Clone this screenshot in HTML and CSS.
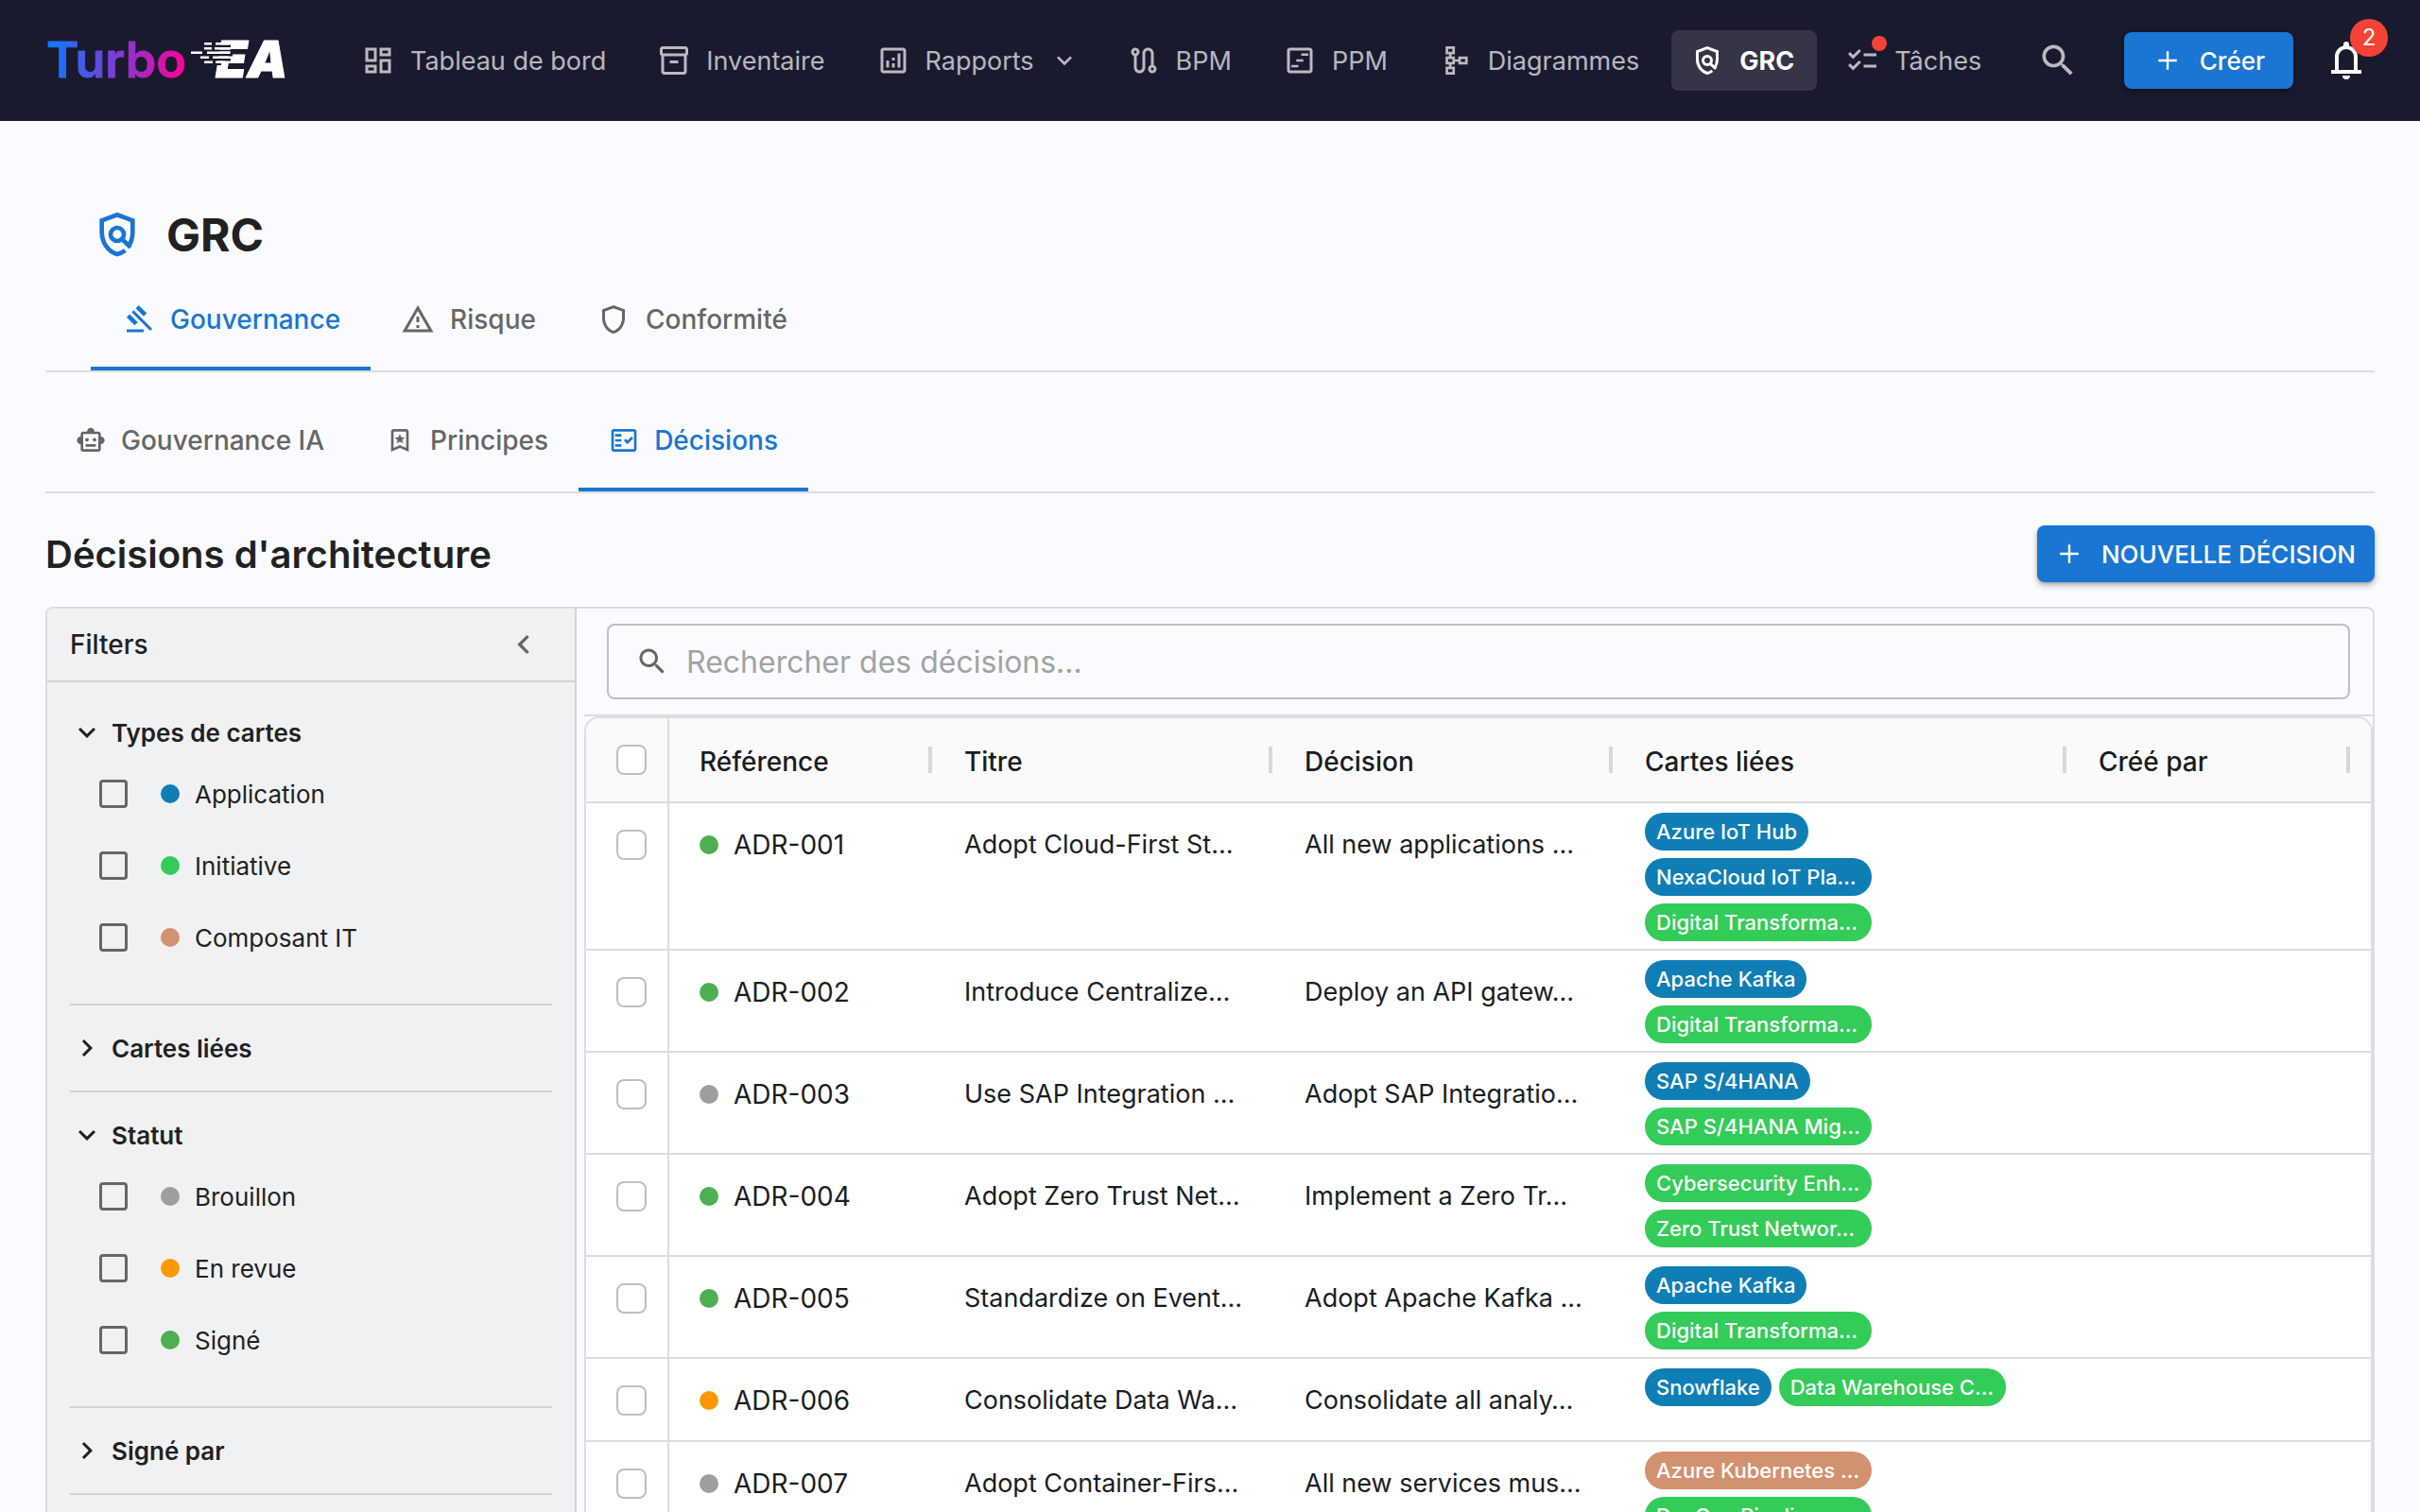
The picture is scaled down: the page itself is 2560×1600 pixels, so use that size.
FILE: index.html
```html
<!DOCTYPE html>
<html lang="fr">
<head>
  <meta charset="UTF-8">
  <meta name="viewport" content="width=device-width, initial-scale=1">
  <title>Turbo EA - GRC</title>
  <link rel="stylesheet" href="styles.css">
</head>
<body>

  <!-- icon sprite -->
  <svg class="sprite" aria-hidden="true">
    <symbol id="i-dashboard" viewBox="0 0 24 24"><path d="M19 5v2h-4V5h4M9 5v6H5V5h4m10 8v6h-4v-6h4M9 17v2H5v-2h4M21 3h-8v6h8V3zM11 3H3v10h8V3zm10 8h-8v10h8V11zm-10 4H3v6h8v-6z"/></symbol>
    <symbol id="i-inventory" viewBox="0 0 24 24"><path d="M20 2H4c-1 0-2 .9-2 2v3.01c0 .72.43 1.34 1 1.69V20c0 1.1 1.1 2 2 2h14c.9 0 2-.9 2-2V8.7c.57-.35 1-.97 1-1.69V4c0-1.1-1-2-2-2zm-1 18H5V9h14v11zm1-13H4V4h16v3zM9 12h6v2H9z"/></symbol>
    <symbol id="i-analytics" viewBox="0 0 24 24"><path d="M19 3H5c-1.1 0-2 .9-2 2v14c0 1.1.9 2 2 2h14c1.1 0 2-.9 2-2V5c0-1.1-.9-2-2-2zm0 16H5V5h14v14zM7 12h2v5H7zM15 7h2v10h-2zM11 14h2v3h-2zM11 10h2v2h-2z"/></symbol>
    <symbol id="i-route" viewBox="0 0 24 24"><path d="M19 15.18V7c0-2.21-1.79-4-4-4s-4 1.79-4 4v10c0 1.1-.9 2-2 2s-2-.9-2-2V8.82C8.16 8.4 9 7.3 9 6c0-1.66-1.34-3-3-3S3 4.34 3 6c0 1.3.84 2.4 2 2.82V17c0 2.21 1.79 4 4 4s4-1.79 4-4V7c0-1.1.9-2 2-2s2 .9 2 2v8.18c-1.16.41-2 1.51-2 2.82 0 1.66 1.34 3 3 3s3-1.34 3-3c0-1.3-.84-2.4-2-2.82zM6 7c-.55 0-1-.45-1-1s.45-1 1-1 1 .45 1 1-.45 1-1 1zm12 12c-.55 0-1-.45-1-1s.45-1 1-1 1 .45 1 1-.45 1-1 1z"/></symbol>
    <symbol id="i-gantt" viewBox="0 0 24 24"><path d="M19 3H5c-1.1 0-2 .9-2 2v14c0 1.1.9 2 2 2h14c1.1 0 2-.9 2-2V5c0-1.1-.9-2-2-2zm0 16H5V5h14v14zM13 7h5v1.6h-5zM9.5 11.2h5v1.6h-5zM6 15.2h5v1.6H6z"/></symbol>
    <symbol id="i-diagram" viewBox="0 0 24 24"><path fill="none" stroke="currentColor" stroke-width="1.8" d="M5.7 2.9h4.8v3.8H5.7zM5.7 10.1h4.8v3.8H5.7zM5.7 17.3h4.8v3.8H5.7zM14.7 10.1h4.8v3.8h-4.8zM8.1 6.7v3.4M8.1 13.9v3.4M10.5 12h4.2"/></symbol>
    <symbol id="i-policy" viewBox="0 0 24 24"><path fill="none" stroke="currentColor" stroke-width="2" d="M15.6 19.3C14.6 20.1 13.4 20.7 12 21 8 19.8 5 15.9 5 11.1V5.7L12 3.1l7 2.6v5.4c0 2-.5 3.9-1.4 5.5M14.2 14.2l3.9 3.7"/><circle cx="12" cy="12" r="3" fill="none" stroke="currentColor" stroke-width="2"/></symbol>
    <symbol id="i-checklist" viewBox="0 0 24 24"><path d="M22 7h-9v2h9V7zm0 8h-9v2h9v-2zM5.54 11L2 7.46l1.41-1.41 2.12 2.12 4.24-4.24 1.41 1.41L5.54 11zm0 8L2 15.46l1.41-1.41 2.12 2.12 4.24-4.24 1.41 1.41L5.54 19z"/></symbol>
    <symbol id="i-search" viewBox="0 0 24 24"><path d="M15.5 14h-.79l-.28-.27C15.41 12.59 16 11.11 16 9.5 16 5.91 13.09 3 9.5 3S3 5.91 3 9.5 5.91 16 9.5 16c1.61 0 3.09-.59 4.23-1.57l.27.28v.79l5 4.99L20.49 19l-4.99-5zm-6 0C7.01 14 5 11.99 5 9.5S7.01 5 9.5 5 14 7.01 14 9.5 11.99 14 9.5 14z"/></symbol>
    <symbol id="i-add" viewBox="0 0 24 24"><path d="M18.5 12.8h-5.7v5.7h-1.6v-5.7H5.5v-1.6h5.7V5.5h1.6v5.7h5.7z"/></symbol>
    <symbol id="i-bell" viewBox="0 0 24 24"><path d="M4 19v-2h2v-7c0-2.8 1.7-5.1 4.5-5.8v-.7a1.5 1.5 0 0 1 3 0v.7C16.3 4.9 18 7.2 18 10v7h2v2H4zm8 3a2 2 0 0 1-2-2h4a2 2 0 0 1-2 2zM8 17h8v-7a4 4 0 0 0-8 0v7z"/></symbol>
    <symbol id="i-gavel" viewBox="0 -960 960 960"><path d="M160-120v-80h480v80H160Zm226-194L160-540l84-86 228 226-86 86Zm254-254L414-796l86-84 226 226-86 86Zm184 408L302-682l56-56 522 522-56 56Z"/></symbol>
    <symbol id="i-warning" viewBox="0 0 24 24"><path d="M12 5.99L19.53 19H4.47L12 5.99M12 2L1 21h22L12 2zm1 14h-2v2h2v-2zm0-6h-2v4h2v-4z"/></symbol>
    <symbol id="i-shield" viewBox="0 0 24 24"><path d="M12 2L4 5v6.09c0 5.05 3.41 9.76 8 10.91 4.59-1.15 8-5.86 8-10.91V5l-8-3zm6 9.09c0 4-2.55 7.7-6 8.83-3.45-1.13-6-4.82-6-8.83v-4.7l6-2.25 6 2.25v4.7z"/></symbol>
    <symbol id="i-robot" viewBox="0 0 24 24"><path d="M20 9V7c0-1.1-.9-2-2-2h-3c0-1.66-1.34-3-3-3S9 3.34 9 5H6c-1.1 0-2 .9-2 2v2c-1.66 0-3 1.34-3 3s1.34 3 3 3v4c0 1.1.9 2 2 2h12c1.1 0 2-.9 2-2v-4c1.66 0 3-1.34 3-3s-1.34-3-3-3zm-2 10H6V7h12v12zM8 15h8v2H8z"/><circle cx="9" cy="11.5" r="1.4"/><circle cx="15" cy="11.5" r="1.4"/></symbol>
    <symbol id="i-bookmark" viewBox="0 0 24 24"><path d="M17 3H7c-1.1 0-2 .9-2 2v16l7-3 7 3V5c0-1.1-.9-2-2-2zm0 15l-5-2.2L7 18V5h10v13zM12 7l1.2 2.5 2.8.3-2.1 1.9.6 2.7-2.5-1.4-2.5 1.4.6-2.7L8 9.8l2.8-.3z"/></symbol>
    <symbol id="i-factcheck" viewBox="0 0 24 24"><path d="M20 3H4c-1.1 0-2 .9-2 2v14c0 1.1.9 2 2 2h16c1.1 0 2-.9 2-2V5c0-1.1-.9-2-2-2zm0 16H4V5h16v14zM19.41 10.42L17.99 9l-3.17 3.17-1.41-1.42L12 12.16 14.82 15zM5 7h5v2H5zM5 11h5v2H5zM5 15h5v2H5z"/></symbol>
    <symbol id="i-down" viewBox="0 0 24 24"><path d="M7.41 8.59L12 13.17l4.59-4.58L18 10l-6 6-6-6z"/></symbol>
    <symbol id="i-left" viewBox="0 0 24 24"><path d="M15.41 7.41L14 6l-6 6 6 6 1.41-1.41L10.83 12z"/></symbol>
    <symbol id="i-right" viewBox="0 0 24 24"><path d="M10 6L8.59 7.41 13.17 12l-4.58 4.59L10 18l6-6z"/></symbol>
  </svg>

  <header class="topbar">
    <a class="logo" href="#" aria-label="Turbo EA">
      <svg viewBox="-8 -10 280 80">
        <defs>
          <linearGradient id="logo-grad" gradientUnits="userSpaceOnUse" x1="2" y1="0" x2="150" y2="0">
            <stop offset="0" stop-color="#0a7bff"/>
            <stop offset="0.55" stop-color="#8a35cf"/>
            <stop offset="1" stop-color="#ff0099"/>
          </linearGradient>
        </defs>
        <text class="logo-turbo" x="1" y="48" fill="url(#logo-grad)" stroke="url(#logo-grad)">Turbo</text>
        <text class="logo-ea" x="180" y="48">EA</text>
        <path class="logo-cuts" d="M176 13.5h20v2.500h-20zM176 18.500h24v2h-24zM176 23h22v2.500h-22zM176 28h20v2.500h-20zM176 33h10v2h-10z"/>
        <path class="logo-lines" d="M168 11h8v2.500h-8zM180 11h14v2.500h-14zM168 16h8v2.500h-8zM179 16h16v2.500h-16zM154 20.500h12v2.500h-12zM171 20.500h24v2.500h-24zM164 25.500h9v2.500h-9zM177 25.500h16v2.500h-16zM168 30.500h9v2.500h-9zM180 30.500h10v2.500h-10z"/>
      </svg>
    </a>

    <nav class="nav">
      <a class="nav-item" href="#"><svg class="icon"><use href="#i-dashboard"/></svg>Tableau de bord</a>
      <a class="nav-item" href="#"><svg class="icon"><use href="#i-inventory"/></svg>Inventaire</a>
      <a class="nav-item has-menu" href="#"><svg class="icon"><use href="#i-analytics"/></svg>Rapports<svg class="icon caret"><use href="#i-down"/></svg></a>
      <a class="nav-item" href="#"><svg class="icon"><use href="#i-route"/></svg>BPM</a>
      <a class="nav-item" href="#"><svg class="icon"><use href="#i-gantt"/></svg>PPM</a>
      <a class="nav-item" href="#"><svg class="icon"><use href="#i-diagram"/></svg>Diagrammes</a>
      <a class="nav-item active" href="#"><svg class="icon"><use href="#i-policy"/></svg>GRC</a>
      <a class="nav-item" href="#"><span class="dot-wrap"><svg class="icon"><use href="#i-checklist"/></svg><span class="red-dot"></span></span>Tâches</a>
    </nav>

    <div class="topbar-actions">
      <button class="icon-btn search-btn" type="button" aria-label="Rechercher"><svg><use href="#i-search"/></svg></button>
      <button class="btn create-btn" type="button"><svg class="icon"><use href="#i-add"/></svg>Créer</button>
      <button class="icon-btn bell-btn" type="button" aria-label="Notifications"><svg><use href="#i-bell"/></svg><span class="badge">2</span></button>
    </div>
  </header>

  <main>
    <div class="page-title">
      <svg><use href="#i-policy"/></svg>
      <h1>GRC</h1>
    </div>

    <div class="tabs main-tabs" role="tablist">
      <button class="tab selected" type="button" role="tab"><svg><use href="#i-gavel"/></svg>Gouvernance</button>
      <button class="tab" type="button" role="tab"><svg><use href="#i-warning"/></svg>Risque</button>
      <button class="tab" type="button" role="tab"><svg><use href="#i-shield"/></svg>Conformité</button>
    </div>

    <div class="tabs sub-tabs" role="tablist">
      <button class="tab" type="button" role="tab"><svg><use href="#i-robot"/></svg>Gouvernance IA</button>
      <button class="tab" type="button" role="tab"><svg><use href="#i-bookmark"/></svg>Principes</button>
      <button class="tab selected" type="button" role="tab"><svg><use href="#i-factcheck"/></svg>Décisions</button>
    </div>

    <div class="section-head">
      <h2>Décisions d'architecture</h2>
      <button class="btn" type="button"><svg class="icon"><use href="#i-add"/></svg>NOUVELLE DÉCISION</button>
    </div>

    <div class="panel">
      <aside class="filters">
        <div class="filters-head">
          <span>Filters</span>
          <button type="button" aria-label="Réduire"><svg><use href="#i-left"/></svg></button>
        </div>

        <section class="group first open">
          <button class="group-head" type="button"><svg><use href="#i-down"/></svg>Types de cartes</button>
          <label><input type="checkbox"><span class="dot app"></span>Application</label>
          <label><input type="checkbox"><span class="dot init"></span>Initiative</label>
          <label><input type="checkbox"><span class="dot itc"></span>Composant IT</label>
        </section>
        <section class="group">
          <button class="group-head" type="button"><svg><use href="#i-right"/></svg>Cartes liées</button>
        </section>
        <section class="group open">
          <button class="group-head" type="button"><svg><use href="#i-down"/></svg>Statut</button>
          <label><input type="checkbox"><span class="dot draft"></span>Brouillon</label>
          <label><input type="checkbox"><span class="dot review"></span>En revue</label>
          <label><input type="checkbox"><span class="dot signed"></span>Signé</label>
        </section>
        <section class="group">
          <button class="group-head" type="button"><svg><use href="#i-right"/></svg>Signé par</button>
        </section>
      </aside>

      <div class="results">
        <div class="toolbar">
          <label class="search">
            <svg><use href="#i-search"/></svg>
            <input type="text" placeholder="Rechercher des décisions…" aria-label="Rechercher des décisions">
          </label>
        </div>

        <div class="grid">
          <table>
            <colgroup>
              <col class="c-check"><col class="c-ref"><col class="c-text"><col class="c-text"><col class="c-cards"><col class="c-by"><col>
            </colgroup>
            <thead>
              <tr>
                <th class="check"><input type="checkbox" aria-label="Tout sélectionner"></th>
                <th><div class="th">Référence</div></th>
                <th><div class="th">Titre</div></th>
                <th><div class="th">Décision</div></th>
                <th><div class="th">Cartes liées</div></th>
                <th><div class="th">Créé par</div></th>
                <th></th>
              </tr>
            </thead>
            <tbody>
              <tr>
                <td class="check"><input type="checkbox" aria-label="ADR-001"></td>
                <td class="ref"><span class="dot signed"></span>ADR-001</td>
                <td>Adopt Cloud-First St…</td>
                <td>All new applications …</td>
                <td><div class="chips"><span class="chip app">Azure IoT Hub</span><span class="chip app long">NexaCloud IoT Pla…</span><span class="chip init long">Digital Transforma…</span></div></td>
                <td></td><td></td>
              </tr>
              <tr>
                <td class="check"><input type="checkbox" aria-label="ADR-002"></td>
                <td class="ref"><span class="dot signed"></span>ADR-002</td>
                <td>Introduce Centralize…</td>
                <td>Deploy an API gatew…</td>
                <td><div class="chips"><span class="chip app">Apache Kafka</span><span class="chip init long">Digital Transforma…</span></div></td>
                <td></td><td></td>
              </tr>
              <tr>
                <td class="check"><input type="checkbox" aria-label="ADR-003"></td>
                <td class="ref"><span class="dot draft"></span>ADR-003</td>
                <td>Use SAP Integration …</td>
                <td>Adopt SAP Integratio…</td>
                <td><div class="chips"><span class="chip app">SAP S/4HANA</span><span class="chip init long">SAP S/4HANA Mig…</span></div></td>
                <td></td><td></td>
              </tr>
              <tr>
                <td class="check"><input type="checkbox" aria-label="ADR-004"></td>
                <td class="ref"><span class="dot signed"></span>ADR-004</td>
                <td>Adopt Zero Trust Net…</td>
                <td>Implement a Zero Tr…</td>
                <td><div class="chips"><span class="chip init long">Cybersecurity Enh…</span><span class="chip init long">Zero Trust Networ…</span></div></td>
                <td></td><td></td>
              </tr>
              <tr>
                <td class="check"><input type="checkbox" aria-label="ADR-005"></td>
                <td class="ref"><span class="dot signed"></span>ADR-005</td>
                <td>Standardize on Event…</td>
                <td>Adopt Apache Kafka …</td>
                <td><div class="chips"><span class="chip app">Apache Kafka</span><span class="chip init long">Digital Transforma…</span></div></td>
                <td></td><td></td>
              </tr>
              <tr>
                <td class="check"><input type="checkbox" aria-label="ADR-006"></td>
                <td class="ref"><span class="dot review"></span>ADR-006</td>
                <td>Consolidate Data Wa…</td>
                <td>Consolidate all analy…</td>
                <td><div class="chips"><span class="chip app">Snowflake</span><span class="chip init long">Data Warehouse C…</span></div></td>
                <td></td><td></td>
              </tr>
              <tr>
                <td class="check"><input type="checkbox" aria-label="ADR-007"></td>
                <td class="ref"><span class="dot draft"></span>ADR-007</td>
                <td>Adopt Container-Firs…</td>
                <td>All new services mus…</td>
                <td><div class="chips"><span class="chip itc long">Azure Kubernetes …</span><span class="chip init long">DevOps Pipeline …</span></div></td>
                <td></td><td></td>
              </tr>
            </tbody>
          </table>
        </div>
      </div>
    </div>
  </main>

</body>
</html>
```
FILE: styles.css
```css
* {
  box-sizing: border-box;
}

body {
  margin: 0;
  height: 100vh;
  display: flex;
  flex-direction: column;
  overflow: hidden;
  background: #fafbfe;
  color: #212121;
  font-family: Inter, "Liberation Sans", sans-serif;
  font-size: 28px;
}

button, input {
  font: inherit;
  color: inherit;
}

button {
  border: none;
  background: none;
  padding: 0;
  cursor: pointer;
}

svg {
  fill: currentColor;
  flex: none;
}

.sprite {
  position: absolute;
  width: 0;
  height: 0;
}

.icon {
  width: 36px;
  height: 36px;
}

/* top bar */
.topbar {
  height: 128px;
  flex: none;
  display: flex;
  align-items: center;
  padding: 0 38px 0 40px;
  background: #1a1a2e;
}

.logo svg {
  display: block;
  width: 280px;
  height: 80px;
}

.logo-turbo {
  font-size: 52px;
  font-weight: 600;
  stroke-width: 1;
  stroke-linejoin: round;
}

.logo-ea {
  font-size: 54px;
  font-weight: 900;
  font-style: italic;
  fill: #fff;
  stroke: #fff;
  stroke-width: 1;
  stroke-linejoin: round;
}

.logo-cuts {
  fill: #1a1a2e;
}

.logo-lines {
  fill: #fff;
}

.nav {
  display: flex;
  gap: 10px;
  margin-left: 42px;
}

.nav-item {
  display: flex;
  align-items: center;
  height: 64px;
  padding: 0 24px 0 20px;
  gap: 16px;
  border-radius: 8px;
  color: rgba(255, 255, 255, 0.7);
  text-decoration: none;
  font-size: 27px;
  white-space: nowrap;
}

.nav-item.has-menu {
  padding-right: 20px;
}

.nav-item.active {
  background: rgba(255, 255, 255, 0.12);
  color: #fff;
  font-weight: 700;
}

.nav-item .caret {
  width: 32px;
  height: 32px;
}

.dot-wrap {
  position: relative;
  display: flex;
}

.red-dot {
  position: absolute;
  top: -8px;
  right: -8px;
  width: 16px;
  height: 16px;
  border-radius: 50%;
  background: #f44336;
}

.topbar-actions {
  display: flex;
  align-items: center;
  margin-left: auto;
}

.icon-btn {
  position: relative;
  display: flex;
  padding: 16px;
}

.search-btn {
  margin-right: 32px;
  color: rgba(255, 255, 255, 0.7);
}

.search-btn svg {
  width: 44px;
  height: 44px;
}

.bell-btn {
  margin-left: 16px;
  color: #fff;
}

.bell-btn svg {
  width: 48px;
  height: 48px;
}

.badge {
  position: absolute;
  top: -4px;
  right: -4px;
  width: 40px;
  height: 40px;
  border-radius: 50%;
  background: #f44336;
  font-size: 24px;
  line-height: 40px;
  text-align: center;
}

.btn {
  display: flex;
  align-items: center;
  gap: 16px;
  height: 60px;
  padding: 0 20px 0 16px;
  border-radius: 8px;
  background: #1976d2;
  color: #fff;
  font-size: 26px;
  font-weight: 500;
  box-shadow: 0 4px 6px rgba(0, 0, 0, 0.25), 0 1px 3px rgba(0, 0, 0, 0.2);
}

.create-btn {
  padding: 0 30px 0 28px;
}

/* page */
main {
  flex: 1;
  min-height: 0;
  display: flex;
  flex-direction: column;
  padding: 92px 48px 0;
}

h1, h2 {
  margin: 0;
}

.page-title {
  display: flex;
  align-items: center;
  gap: 24px;
  height: 56px;
  margin: 0 48px 8px;
}

.page-title svg {
  width: 56px;
  height: 56px;
  color: #1976d2;
}

h1 {
  font-size: 48px;
  font-weight: 700;
}

.tabs {
  flex: none;
  display: flex;
  border-bottom: 2px solid #dcdddf;
}

.main-tabs {
  padding-left: 48px;
}

.sub-tabs {
  margin-top: 18px;
}

.tab {
  display: flex;
  align-items: center;
  gap: 16px;
  height: 108px;
  padding: 0 32px;
  color: #666;
  font-weight: 500;
}

.tab.selected {
  color: #1976d2;
  box-shadow: inset 0 -4px #1976d2;
}

.main-tabs svg {
  width: 36px;
  height: 36px;
}

.sub-tabs svg {
  width: 32px;
  height: 32px;
}

.section-head {
  display: flex;
  align-items: center;
  justify-content: space-between;
  margin: 34px 0 26px;
}

h2 {
  font-size: 40px;
  font-weight: 600;
}

.panel {
  flex: 1;
  min-height: 0;
  display: flex;
  overflow: hidden;
  border: 2px solid #dcdddf;
  border-bottom: none;
  border-radius: 8px 8px 0 0;
}

/* filters */
.filters {
  flex: none;
  width: 560px;
  background: #f0f1f3;
  border-right: 2px solid #d2d3d5;
}

.filters-head {
  display: flex;
  align-items: center;
  justify-content: space-between;
  height: 78px;
  padding: 0 34px 0 24px;
  border-bottom: 2px solid #d2d3d5;
  font-weight: 500;
}

.filters-head button {
  display: flex;
  color: #666;
}

.filters-head svg {
  width: 40px;
  height: 40px;
}

.group {
  margin: 0 24px;
  padding: 18px 0;
  border-bottom: 2px solid #d2d3d5;
}

.group.open {
  padding-bottom: 32px;
}

.group.first {
  padding-top: 26px;
}

.group-head {
  display: flex;
  align-items: center;
  gap: 8px;
  height: 54px;
  font-size: 26px;
  font-weight: 600;
}

.group-head svg {
  width: 36px;
  height: 36px;
}

.group label {
  display: flex;
  align-items: center;
  height: 76px;
  padding-left: 31px;
  font-size: 26px;
}

input[type="checkbox"] {
  appearance: none;
  display: block;
  margin: 0;
  width: 32px;
  height: 32px;
  border: 2px solid #bfbfbf;
  border-radius: 8px;
  background: #fff;
}

.group input[type="checkbox"] {
  width: 30px;
  height: 30px;
  margin-right: 35px;
  border: 3px solid #666;
  border-radius: 4px;
  background: none;
}

.dot {
  display: inline-block;
  width: 20px;
  height: 20px;
  margin-right: 16px;
  border-radius: 50%;
}

.app { background: #0f7eb5; }
.init { background: #33cc58; }
.itc { background: #d29270; }
.draft { background: #9e9e9e; }
.review { background: #ff9800; }
.signed { background: #4caf50; }

/* results */
.results {
  flex: 1;
  min-width: 0;
  padding-left: 8px;
}

.toolbar {
  padding: 16px 24px;
  border-bottom: 2px solid #dcdddf;
}

.search {
  display: flex;
  align-items: center;
  gap: 16px;
  height: 80px;
  padding: 0 28px;
  border: 2px solid #bfc0c2;
  border-radius: 8px;
}

.search svg {
  width: 36px;
  height: 36px;
  color: #666;
}

.search input {
  flex: 1;
  border: none;
  outline: none;
  background: none;
  font-size: 32px;
}

.search input::placeholder {
  color: #a1a2a3;
  opacity: 1;
}

.grid {
  border: 2px solid #dcdddf;
  border-radius: 16px 16px 0 0;
  overflow: hidden;
  background: #fff;
  color: #181d1f;
}

table {
  width: 100%;
  table-layout: fixed;
  border-collapse: separate;
  border-spacing: 0;
}

.c-check { width: 88px; }
.c-ref { width: 280px; }
.c-text { width: 360px; }
.c-cards { width: 480px; }
.c-by { width: 300px; }

th {
  height: 90px;
  padding: 0 2px 0 32px;
  background: #fafafa;
  border-bottom: 2px solid #dadada;
  font-size: 28px;
  font-weight: 500;
  text-align: left;
}

.th {
  display: flex;
  align-items: center;
  justify-content: space-between;
  padding-top: 4px;
}

/* resize handle */
.th::after {
  content: "";
  width: 4px;
  height: 28px;
  margin-bottom: 4px;
  background: #d8d8d8;
}

td {
  height: 88px;
  padding: 2px 32px 0;
  border-bottom: 2px solid #dcdcdc;
  vertical-align: top;
  font-size: 27px;
  line-height: 84px;
  white-space: nowrap;
}

.ref {
  font-size: 28px;
}

.check {
  padding: 28px 0 0 32px;
  border-right: 2px solid #dcdcdc;
  vertical-align: top;
  line-height: 32px;
}

.chips {
  display: flex;
  flex-wrap: wrap;
  gap: 8px;
  padding: 8px 0;
}

.chip {
  height: 40px;
  padding: 0 12px;
  border-radius: 20px;
  color: #fff;
  font-size: 22px;
  font-weight: 500;
  line-height: 40px;
}

.chip.long {
  width: 240px;
}
```
